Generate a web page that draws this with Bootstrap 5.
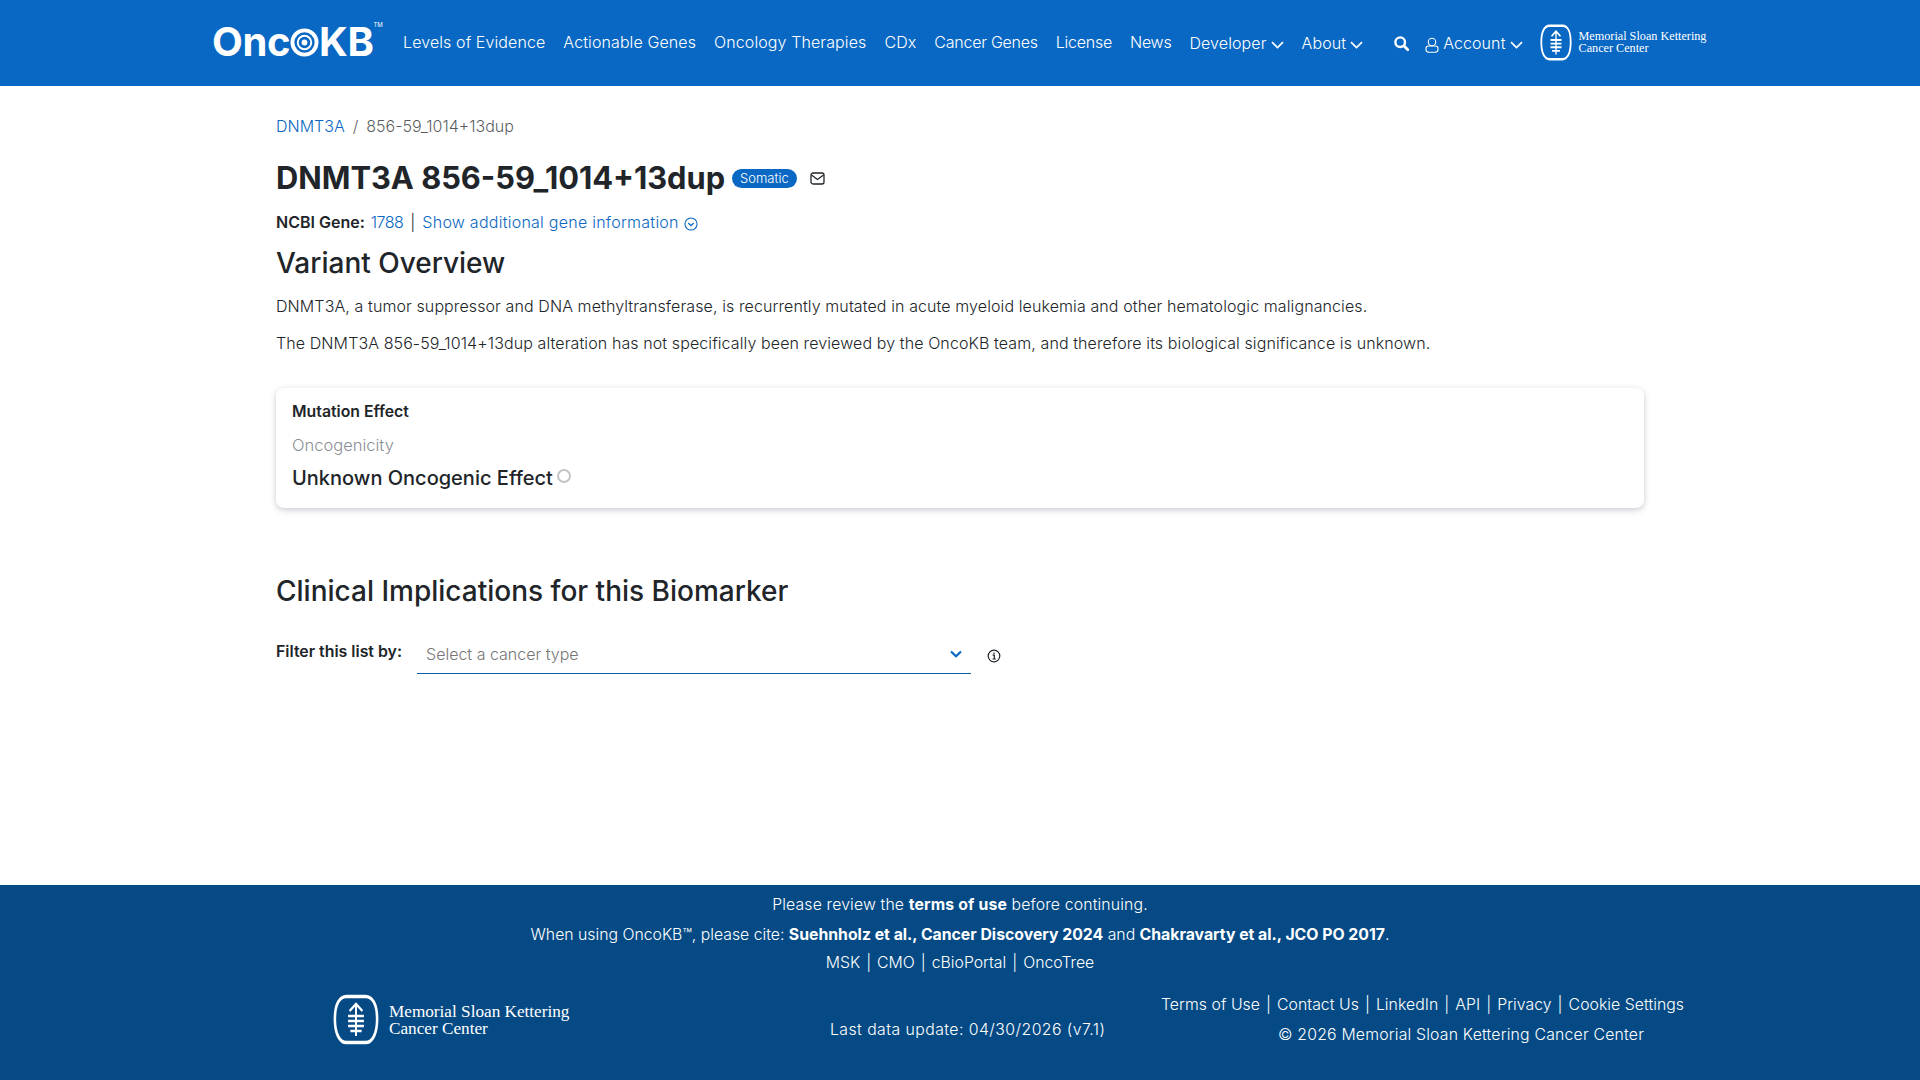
<!DOCTYPE html>
<html lang="en">
<head>
<meta charset="UTF-8">
<title>OncoKB</title>
<link rel="stylesheet" href="https://cdn.jsdelivr.net/npm/bootstrap@5.3.0/dist/css/bootstrap.min.css">
<style>
  body { font-family: Inter, "Liberation Sans", sans-serif; font-size: 16px; color: #212529; min-height: 1080px; display: flex; flex-direction: column; }
  a { color: #0968c3; text-decoration: none; }
  .okb-nav { background: #0968c3; height: 86px; padding: 0 0 2px 212px; }
  .okb-logo { font-family: Inter, sans-serif; font-weight: 700; font-size: 40px; letter-spacing: -.4px; color: #fff; line-height: 1; width: 182px; }
  .okb-logo sup { font-size: 6px; font-weight: 400; top: -2.9em; letter-spacing: 0; }
  .okb-nav .nav-link { color: #fff; padding: 0 9px; font-size: 16px; letter-spacing: .1px; font-weight: 300; white-space: nowrap; }
  .okb-nav .nav-tight { letter-spacing: -.25px; }
  .okb-nav .nav-drop { padding-top: 2px; }
  .okb-nav .nav-search { margin-left: 13px; }
  .okb-nav .nav-account { margin-left: -2px; }
  .chev { margin-left: 4px; }
  .msk-text { font-family: "Liberation Serif", serif; color: #fff; line-height: 1; }
  .msk-top { font-size: 12.2px; width: 142px; margin-left: 7px; line-height: 12px; }
  .msk-wrap { margin-left: 8px; }
  .okb-main { flex: 1; width: 1392px; margin: 0 auto; padding: 0 12px; }
  .crumb-line { font-size: 16px; font-weight: 300; margin: 28px 0 0; line-height: 24px; }
  .okb-title { font-size: 30.8px; font-weight: 700; margin: 21px 0 0; line-height: 38px; }
  .okb-pill { background: #0968c3; font-size: 13px; font-weight: 300; padding: 2px 8px 3px; border-radius: 10px; color: #fff; line-height: 14px; margin-left: 7px; }
  .mail-icon { margin-left: 13px; }
  .gene-line { font-size: 16px; margin-top: 13px; line-height: 24px; font-weight: 300; }
  .gene-id { margin-left: 6px; letter-spacing: -.5px; }
  .gene-sep { margin: 0 7px; }
  .gene-more { letter-spacing: .25px; }
  .okb-h2 { font-size: 28px; font-weight: 500; line-height: 32px; margin: 13px 0 0; }
  .okb-p { font-size: 16px; letter-spacing: .1px; font-weight: 300; line-height: 24px; margin: 0; }
  .okb-p-first { margin-top: 15px; }
  .okb-p-gap { margin-top: 13px; }
  .effect-box { margin-top: 33px; height: 120px; border: 0; border-radius: 8px; box-shadow: 0 2px 6px rgba(60, 70, 90, .28); padding: 13px 16px 12px; }
  .okb-label { font-size: 15.8px; font-weight: 600; line-height: 22px; }
  .okb-muted { font-size: 16.5px; font-weight: 300; color: #8a8f96; line-height: 22px; margin-top: 11px; }
  .okb-effect { font-size: 20px; font-weight: 500; line-height: 26px; margin-top: 9px; }
  .okb-ring { width: 14px; height: 14px; border: 2px solid #c4c4c4; border-radius: 50%; display: inline-block; vertical-align: 2px; margin-left: 4px; }
  .clin-head { margin-top: 67px; }
  .filter-row { margin-top: 27px; }
  .filter-label { font-size: 15.9px; font-weight: 600; margin-top: -4px; }
  .cancer-select { width: 554px; height: 40px; border-bottom: 1.5px solid #0f5fa8; color: #767676; font-size: 16px; font-weight: 300; padding: 0 9px; margin-left: 15px; }
  .info-icon { margin: 3px 0 0 16px; }
  .okb-foot { background: #054a85; height: 195px; color: #fff; font-size: 15.8px; font-weight: 300; }
  .okb-foot a { color: #fff; }
  .foot-lines div { line-height: 24px; margin-bottom: 5px; }
  .foot-lines a.fw-bold { font-weight: 600; }
  .foot-first { letter-spacing: .15px; }
  .foot-cite { position: relative; top: 1px; }
  .foot-row { display: grid; grid-template-columns: 497px 331px 530px; padding-left: 333px; margin-top: 18px; }
  .msk-big { font-size: 17.2px; line-height: 17px; margin-left: 10px; width: 205px; }
  .last-update { padding-top: 21px; letter-spacing: .45px; }
  .copy-line { margin: 6px 0 0 117px; letter-spacing: .2px; }
  .bar > * + *::before { content: "|"; margin: 0 6px; font-weight: 300; }
  .foot-links { letter-spacing: .05px; }
</style>
</head>
<body>
<nav class="okb-nav d-flex align-items-center">
  <div class="okb-logo d-flex align-items-center">Onc<svg width="29" height="29" viewBox="0 0 30 30"><circle cx="15" cy="15" r="12.5" fill="none" stroke="#fff" stroke-width="4"/><circle cx="15" cy="15" r="7" fill="none" stroke="#fff" stroke-width="2"/><circle cx="15" cy="15" r="3" fill="#fff"/></svg>KB<sup>TM</sup></div>
  <a class="nav-link" href="#">Levels of Evidence</a>
  <a class="nav-link" href="#">Actionable Genes</a>
  <a class="nav-link" href="#">Oncology Therapies</a>
  <a class="nav-link" href="#">CDx</a>
  <a class="nav-link nav-tight" href="#">Cancer Genes</a>
  <a class="nav-link nav-tight" href="#">License</a>
  <a class="nav-link nav-tight" href="#">News</a>
  <a class="nav-link nav-drop" href="#">Developer<svg class="chev" width="13" height="8" viewBox="0 0 13 8"><path d="M1 1.2l5.500 5.300L12 1.200" fill="none" stroke="#fff" stroke-width="1.700"/></svg></a>
  <a class="nav-link nav-drop" href="#">About<svg class="chev" width="13" height="8" viewBox="0 0 13 8"><path d="M1 1.2l5.500 5.300L12 1.200" fill="none" stroke="#fff" stroke-width="1.700"/></svg></a>
  <a class="nav-link nav-search" href="#"><svg width="15" height="15" viewBox="0 0 15 15"><circle cx="6.2" cy="6.200" r="4.800" fill="none" stroke="#fff" stroke-width="2.400"/><path d="M9.800 9.800l4 4" stroke="#fff" stroke-width="2.800" stroke-linecap="round"/></svg></a>
  <a class="nav-link nav-drop nav-account" href="#"><svg width="14" height="16" viewBox="0 0 14 16" class="me-1"><circle cx="7" cy="5" r="3.700" fill="none" stroke="#fff" stroke-width="1.100"/><rect x="1" y="9" width="12" height="6.200" rx="2.600" fill="none" stroke="#fff" stroke-width="1.100"/></svg>Account<svg class="chev" width="13" height="8" viewBox="0 0 13 8"><path d="M1 1.2l5.500 5.300L12 1.200" fill="none" stroke="#fff" stroke-width="1.700"/></svg></a>
  <div class="d-flex align-items-center msk-wrap">
    <svg width="32" height="37" viewBox="0 0 61 51" preserveAspectRatio="none"><use href="#msk-mark"/></svg>
    <div class="msk-text msk-top">Memorial Sloan Kettering Cancer Center</div>
  </div>
</nav>

<svg width="0" height="0" class="position-absolute"><defs><g id="msk-mark" fill="none" stroke="#fff"><path d="M18 2.500h25c9.500 0 15.500 8 15.500 22.500S52.500 48.500 43 48.500H18C8.500 48.500 2.500 39.500 2.500 25S8.500 2.500 18 2.500z" stroke-width="3.400"/><path d="M30.500 9v33M22 17l8.500-7 8.500 7M20 22h21M20 27h21M20 32h21M23 37h15" stroke-width="2.600"/></g></defs></svg>

<main class="okb-main">
  <ol class="breadcrumb crumb-line">
    <li class="breadcrumb-item"><a href="#">DNMT3A</a></li>
    <li class="breadcrumb-item active">856-59_1014+13dup</li>
  </ol>
  <div class="d-flex align-items-center okb-title">
    <span>DNMT3A 856-59_1014+13dup</span>
    <span class="badge okb-pill">Somatic</span>
    <svg class="mail-icon" width="15" height="13" viewBox="0 0 15 13"><rect x="1" y="1" width="13" height="11" rx="2" fill="none" stroke="#212529" stroke-width="1.300"/><path d="M1.500 3l6 4.500 6-4.500" fill="none" stroke="#212529" stroke-width="1.300"/></svg>
  </div>
  <div class="gene-line d-flex align-items-center">
    <span class="fw-semibold">NCBI Gene:</span><a class="gene-id" href="#">1788</a><span class="gene-sep">|</span>
    <a class="gene-more" href="#">Show additional gene information <svg width="14" height="14" viewBox="0 0 13 13"><circle cx="6.500" cy="6.500" r="5.600" fill="none" stroke="#0968c3"/><path d="M4 5.500l2.500 2.500L9 5.500" fill="none" stroke="#0968c3" stroke-width="1.200"/></svg></a>
  </div>
  <h2 class="okb-h2">Variant Overview</h2>
  <p class="okb-p okb-p-first">DNMT3A, a tumor suppressor and DNA methyltransferase, is recurrently mutated in acute myeloid leukemia and other hematologic malignancies.</p>
  <p class="okb-p okb-p-gap">The DNMT3A 856-59_1014+13dup alteration has not specifically been reviewed by the OncoKB team, and therefore its biological significance is unknown.</p>

  <div class="card effect-box">
    <div class="okb-label">Mutation Effect</div>
    <div class="okb-muted">Oncogenicity</div>
    <div class="okb-effect">Unknown Oncogenic Effect<span class="okb-ring"></span></div>
  </div>

  <h2 class="okb-h2 clin-head">Clinical Implications for this Biomarker</h2>
  <div class="d-flex align-items-center filter-row">
    <span class="filter-label">Filter this list by:</span>
    <div class="cancer-select d-flex align-items-center justify-content-between">
      <span>Select a cancer type</span>
      <svg width="12" height="8" viewBox="0 0 12 8"><path d="M1 1.500l5 4.800 5-4.800" fill="none" stroke="#0968c3" stroke-width="2.200"/></svg>
    </div>
    <svg class="info-icon" width="14" height="14" viewBox="0 0 14 14"><circle cx="7" cy="7" r="5.800" fill="none" stroke="#212529" stroke-width="1.200"/><path d="M5.600 6.200H7.300V10M5.500 10h3.400M7 3.600v1.300" fill="none" stroke="#212529" stroke-width="1.200"/></svg>
  </div>
</main>

<footer class="okb-foot">
  <div class="foot-lines text-center pt-2">
    <div class="foot-first">Please review the <a class="fw-bold" href="#">terms of use</a> before continuing.</div>
    <div class="foot-cite">When using OncoKB™, please cite: <a class="fw-bold" href="#">Suehnholz et al., Cancer Discovery 2024</a> and <a class="fw-bold" href="#">Chakravarty et al., JCO PO 2017</a>.</div>
    <div class="bar d-flex justify-content-center"><a href="#">MSK</a><a href="#">CMO</a><a href="#">cBioPortal</a><a href="#">OncoTree</a></div>
  </div>
  <div class="foot-row">
    <div class="d-flex align-items-center">
      <svg width="46" height="51" viewBox="0 0 61 51" preserveAspectRatio="none"><use href="#msk-mark"/></svg>
      <div class="msk-text msk-big">Memorial Sloan Kettering Cancer Center</div>
    </div>
    <div class="d-flex align-items-center last-update">Last data update: 04/30/2026 (v7.1)</div>
    <div>
      <div class="bar foot-links d-flex"><a href="#">Terms of Use</a><a href="#">Contact Us</a><a href="#">LinkedIn</a><a href="#">API</a><a href="#">Privacy</a><a href="#">Cookie Settings</a></div>
      <div class="copy-line">© 2026 Memorial Sloan Kettering Cancer Center</div>
    </div>
  </div>
</footer>
<script src="https://cdn.jsdelivr.net/npm/bootstrap@5.3.0/dist/js/bootstrap.bundle.min.js"></script>
</body>
</html>
